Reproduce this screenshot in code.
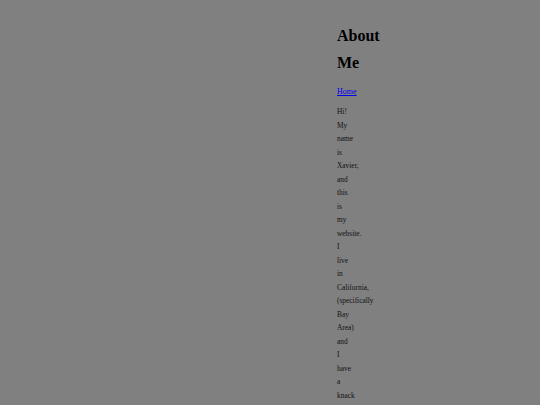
import React from 'react';

const bio =
  'Hi! My name is Xavier, and this is my website. I live in California, (specifically Bay Area) and I have a knack';

export default function App() {
  return (
    <div className="min-h-screen bg-[#808080] pl-[337px] pt-[22px] text-black font-['Liberation_Serif',serif]">
      {/* narrow column: every word breaks onto its own line */}
      <div className="w-px">
        <h1 className="text-[16px] font-bold leading-[27px]">About Me</h1>
        <nav className="mt-[9px] text-[8px] leading-[13.5px]">
          <a href="/" className="text-[#0000ee] underline">
            Home
          </a>
        </nav>
        <p className="mt-[6.5px] text-[7.4px] leading-[13.5px] text-[#111]">{bio}</p>
      </div>
    </div>
  );
}
